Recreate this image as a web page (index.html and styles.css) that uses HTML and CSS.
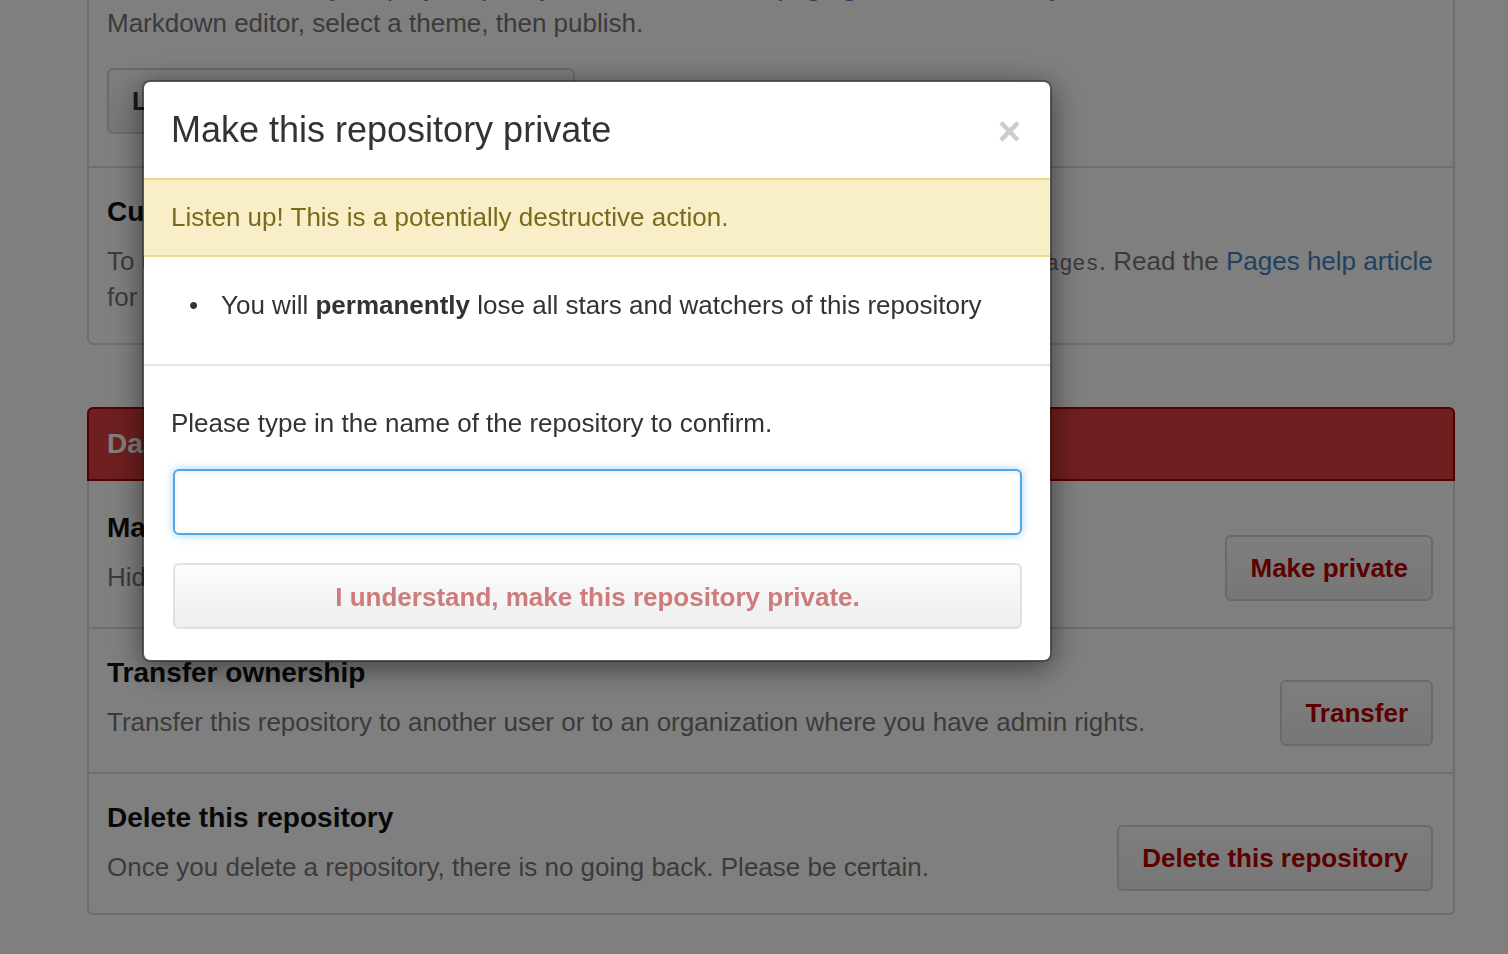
FILE: index.html
```html
<!DOCTYPE html>
<html>
<head>
<meta charset="utf-8">
<title>Options</title>
<link rel="stylesheet" href="styles.css">
</head>
<body>
<main class="page">
  <div class="boxed">
    <section class="sect">
      <p class="desc">Generate a site for your project quickly with our <a class="link">automatic page generator</a>. Author your content in our<br>Markdown editor, select a theme, then publish.</p>
      <button class="btn btn-launch">Launch automatic page generator</button>
    </section>
    <section class="sect sect-domain">
      <h4 class="sect-title">Custom domain</h4>
      <p class="desc">To use a custom domain, add a CNAME file to the root of the branch named <code class="code">gh-pages</code>. Read the <a class="link">Pages help article</a><br>for more information.</p>
    </section>
  </div>

  <div class="danger">
    <h3 class="danger-head">Danger Zone</h3>
    <div class="danger-body">
      <div class="dz-row dz-first">
        <div class="dz-text">
          <h4 class="sect-title">Make this repository private</h4>
          <p class="desc">Hide this repository from the public.</p>
        </div>
        <button class="btn btn-danger">Make private</button>
      </div>
      <div class="dz-row">
        <div class="dz-text">
          <h4 class="sect-title">Transfer ownership</h4>
          <p class="desc">Transfer this repository to another user or to an organization where you have admin rights.</p>
        </div>
        <button class="btn btn-danger">Transfer</button>
      </div>
      <div class="dz-row dz-last">
        <div class="dz-text">
          <h4 class="sect-title">Delete this repository</h4>
          <p class="desc">Once you delete a repository, there is no going back. Please be certain.</p>
        </div>
        <button class="btn btn-danger">Delete this repository</button>
      </div>
    </div>
  </div>
</main>

<div class="overlay"></div>

<div class="modal">
  <div class="modal-head">
    <h2 class="modal-title">Make this repository private</h2>
    <button class="modal-close">×</button>
  </div>
  <div class="flash-warn">Listen up! This is a potentially destructive action.</div>
  <div class="modal-list">
    <ul class="warn-list">
      <li>You will <strong>permanently</strong> lose all stars and watchers of this repository</li>
    </ul>
  </div>
  <div class="modal-confirm">
    <p class="confirm-label">Please type in the name of the repository to confirm.</p>
    <input class="confirm-input" type="text">
    <button class="confirm-btn">I understand, make this repository private.</button>
  </div>
</div>
</body>
</html>
```

FILE: styles.css
```css
html, body {
  margin: 0;
  padding: 0;
}

body {
  background: #fff;
  font-family: "Liberation Sans", Arial, Helvetica, sans-serif;
  font-size: 26px;
  line-height: 36px;
  color: #333;
  overflow: hidden;
  height: 954px;
}

.page {
  width: 1368px;
  margin-left: 87px;
}

.boxed {
  margin-top: -60px;
  border: 2px solid #dcdcdc;
  border-radius: 6px;
}

.sect {
  padding: 27px 20px 32px 18px;
}

.sect-domain {
  border-top: 2px solid #dcdcdc;
  padding-bottom: 28px;
}

.desc {
  margin: 0;
  color: #777;
  line-height: 36px;
}

.sect-title {
  margin: 0 0 14px;
  font-size: 28px;
  line-height: 34px;
  font-weight: bold;
  color: #111;
}

.link {
  color: #4183c4;
  text-decoration: none;
}

.code {
  font-family: "Liberation Mono", "DejaVu Sans Mono", monospace;
  font-size: 22px;
  line-height: 1;
  padding-left: 6px;
}

.btn {
  display: inline-block;
  box-sizing: border-box;
  height: 66px;
  padding: 0 23px;
  border: 2px solid #d5d5d5;
  border-radius: 6px;
  background: linear-gradient(#fcfcfc, #eeeeee);
  font-family: inherit;
  font-size: 26px;
  font-weight: bold;
  line-height: 62px;
  color: #333;
  white-space: nowrap;
}

.btn-launch {
  margin-top: 27px;
  display: block;
}

.btn-danger {
  color: #bb0000;
  flex: none;
  margin-top: 24px;
}

.danger {
  margin-top: 62px;
}

.danger-head {
  margin: 0;
  padding: 18px 18px;
  background: #df3e3e;
  border: 2px solid #aa0000;
  border-radius: 6px 6px 0 0;
  color: #fff;
  font-size: 28px;
  line-height: 34px;
  font-weight: bold;
}

.danger-body {
  border: 2px solid #dcdcdc;
  border-top: none;
  border-radius: 0 0 6px 6px;
}

.dz-row {
  display: flex;
  justify-content: space-between;
  align-items: flex-start;
  padding: 27px 20px 26px 18px;
  border-top: 2px solid #dcdcdc;
}

.dz-first {
  border-top: none;
  padding-top: 30px;
}

.dz-last {
  padding-bottom: 22px;
}

.overlay {
  position: fixed;
  inset: 0;
  background: rgba(0, 0, 0, 0.5);
}

.modal {
  position: fixed;
  left: 142px;
  top: 80px;
  width: 910px;
  box-sizing: border-box;
  background: #fff;
  border: 2px solid rgba(0, 0, 0, 0.3);
  border-radius: 8px;
  box-shadow: 0 6px 30px rgba(0, 0, 0, 0.5);
  background-clip: padding-box;
}

.modal-head {
  display: flex;
  justify-content: space-between;
  align-items: center;
  padding: 28px 29px 28px 27px;
}

.modal-title {
  margin: 0;
  font-size: 36px;
  line-height: 40px;
  font-weight: normal;
  color: #333;
}

.modal-close {
  border: none;
  background: none;
  padding: 2px 0 0;
  height: 40px;
  font-family: inherit;
  font-size: 40px;
  line-height: 38px;
  font-weight: bold;
  color: #cccccc;
}

.flash-warn {
  padding: 19px 28px 20px 27px;
  background: #f8eec7;
  border-top: 2px solid #f1d88c;
  border-bottom: 2px solid #f1d88c;
  color: #7a6a1c;
}

.modal-list {
  padding: 30px 28px 41px 27px;
  border-bottom: 2px solid #e5e5e5;
}

.warn-list {
  margin: 0;
  padding-left: 50px;
  list-style: none;
}

.warn-list li::before {
  content: "•";
  display: inline-block;
  width: 32px;
  margin-left: -32px;
}

.warn-list strong {
  color: #333;
}

.modal-confirm {
  padding: 39px 28px 31px 27px;
}

.confirm-label {
  margin: 0;
}

.confirm-input {
  display: block;
  box-sizing: border-box;
  width: calc(100% - 2px);
  height: 66px;
  margin: 28px 1px 0 2px;
  border: 2px solid #51a7e8;
  border-radius: 6px;
  box-shadow: inset 0 2px 4px rgba(0, 0, 0, 0.075), 0 0 10px rgba(81, 167, 232, 0.5);
  outline: none;
  font-family: inherit;
  font-size: 26px;
}

.confirm-btn {
  display: block;
  box-sizing: border-box;
  width: calc(100% - 2px);
  height: 66px;
  margin: 28px 1px 0 2px;
  border: 2px solid #e1e1e1;
  border-radius: 6px;
  background: linear-gradient(#fcfcfc, #eeeeee);
  font-family: inherit;
  font-size: 26px;
  font-weight: bold;
  line-height: 62px;
  color: #cd7b7b;
}
```
